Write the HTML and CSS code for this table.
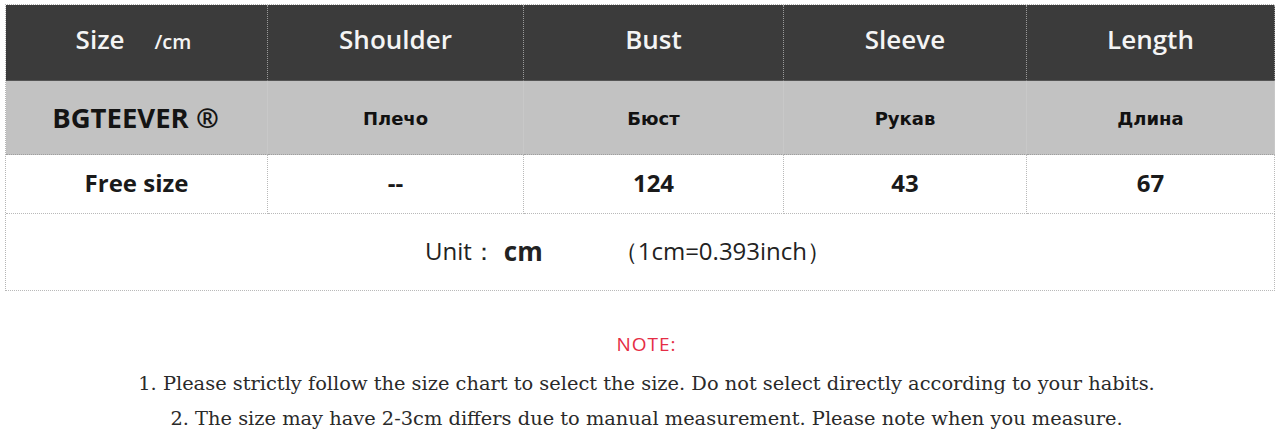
FILE: index.html
```html
<!DOCTYPE html>
<html>
<head>
<meta charset="utf-8">
<link rel="stylesheet" href="styles.css">
</head>
<body>
<div class="chart">
  <div class="cell head first"><span class="big">Size</span><span class="unitsm">/cm</span></div>
  <div class="cell head">Shoulder</div>
  <div class="cell head">Bust</div>
  <div class="cell head">Sleeve</div>
  <div class="cell head last">Length</div>

  <div class="cell sub brand first">BGTEEVER ®</div>
  <div class="cell sub">Плечо</div>
  <div class="cell sub">Бюст</div>
  <div class="cell sub">Рукав</div>
  <div class="cell sub last">Длина</div>

  <div class="cell data first">Free size</div>
  <div class="cell data">--</div>
  <div class="cell data">124</div>
  <div class="cell data">43</div>
  <div class="cell data last">67</div>

  <div class="cell unit">
    <span>Unit：</span><span class="cm">cm</span><span class="conv">（1cm=0.393inch）</span>
  </div>
</div>
<div class="notes">
  <p class="note-title">NOTE:</p>
  <p class="note-line">1. Please strictly follow the size chart to select the size. Do not select directly according to your habits.</p>
  <p class="note-line">2. The size may have 2-3cm differs due to manual measurement. Please note when you measure.</p>
</div>
</body>
</html>
```
FILE: styles.css
```css
html, body {
  margin: 0;
  padding: 0;
  background: #ffffff;
}
body {
  padding: 4px 0 0 5px;
  font-family: "Open Sans", "Liberation Sans", sans-serif;
}
.chart {
  display: grid;
  grid-template-columns: 262px 256px 260px 243px 248px;
  grid-template-rows: 76px 74px 59px 77px;
  width: 1269px;
  border-left: 1px dotted #b5b5b5;
  border-top: 1px dotted #b5b5b5;
  box-sizing: border-box;
}
.cell {
  display: flex;
  align-items: center;
  justify-content: center;
  border-right: 1px dotted #b9b9b9;
  border-bottom: 1px dotted #b9b9b9;
  box-sizing: border-box;
}
.head {
  background: #3b3b3b;
  color: #f4f4f4;
  font-weight: 600;
  font-size: 26px;
  border-right: 1px dotted #9a9a9a;
  border-bottom: 1px solid #555;
  padding-bottom: 7px;
}
.head.first {
  gap: 30px;
  padding-right: 6px;
}
.unitsm {
  font-size: 20px;
  font-weight: 600;
  padding-top: 4px;
}
.sub {
  background: #c2c2c2;
  color: #111;
  font-family: "DejaVu Sans", "Liberation Sans", sans-serif;
  font-weight: 700;
  font-size: 18px;
  border-right: 1px solid #c8c8c8;
  border-bottom: 1px dotted #9f9f9f;
  padding-top: 1px;
}
.sub.brand {
  font-family: "Open Sans", "Liberation Sans", sans-serif;
  font-weight: 700;
  font-size: 27.5px;
  color: #141414;
  padding-right: 2px;
  padding-bottom: 2px;
}
.data {
  font-weight: 700;
  font-size: 24px;
  color: #1a1a1a;
  padding-bottom: 4px;
}
.unit {
  grid-column: 1 / span 5;
  font-size: 24px;
  color: #222;
  padding: 0 14px 2px 0;
}
.unit .cm {
  font-weight: 700;
  font-size: 26px;
  margin-left: 8px;
  margin-right: 71px;
}
.unit .conv {
  padding-right: 10px;
}
.notes {
  text-align: center;
  margin-top: 40px;
  width: 1269px;
  padding-left: 14px;
  box-sizing: border-box;
}
.notes p {
  margin: 0;
}
.note-title {
  color: #e52d45;
  font-size: 19px;
  letter-spacing: 1px;
  line-height: 26px;
  font-family: "Open Sans", "Liberation Sans", sans-serif;
}
.note-line {
  font-family: "DejaVu Serif", "Liberation Serif", serif;
  font-size: 19.4px;
  color: #2a2a2a;
  line-height: 35px;
}
.notes .note-title + .note-line {
  margin-top: 9px;
}
```
